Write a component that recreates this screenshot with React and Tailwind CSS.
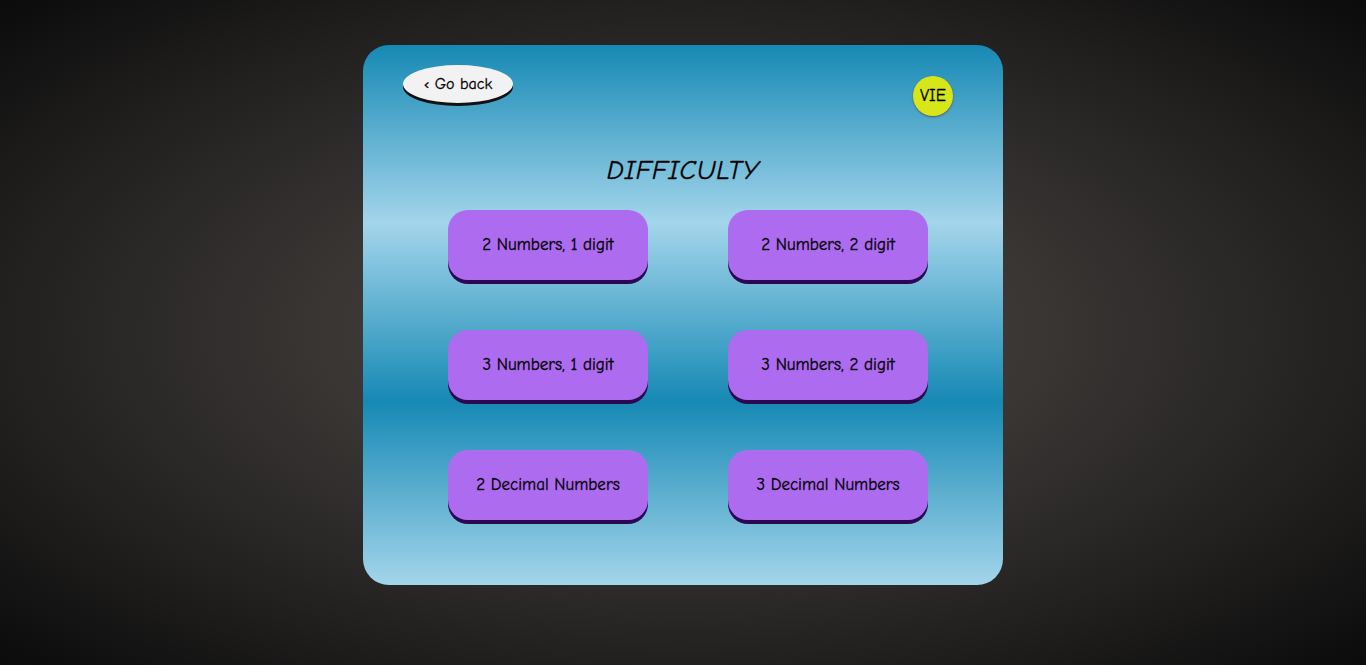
import React from 'react';

const levels = [
  '2 Numbers, 1 digit',
  '2 Numbers, 2 digit',
  '3 Numbers, 1 digit',
  '3 Numbers, 2 digit',
  '2 Decimal Numbers',
  '3 Decimal Numbers',
];

const App = () => {
  return (
    <div
      className="w-full h-[665px] flex justify-center pt-[45px] bg-[radial-gradient(ellipse_at_center,#4a4643_0%,#3a3735_35%,#262423_65%,#0b0b0b_100%)]"
      style={{ fontFamily: '"Comic Sans MS", "Comic Neue", "Lato", sans-serif' }}
    >
      <div className="w-[640px] h-[540px] rounded-[26px] px-10 pt-5 bg-[linear-gradient(180deg,#1689b4_0%,#a3d5eb_33%,#1689b4_66%,#a3d5eb_100%)]">
        <div className="flex items-start justify-between">
          <button className="w-[110px] h-[38px] rounded-[50%] bg-[#f2f2f2] shadow-[0_3px_0_#111] text-[16px] text-black [-webkit-text-stroke:0.3px_black]">
            ‹ Go back
          </button>
          <button className="mt-[11px] mr-[10px] w-10 h-10 rounded-full bg-[#d6e619] shadow-[0_1px_2px_#556] text-[17px] text-black [-webkit-text-stroke:0.3px_black]">
            VIE
          </button>
        </div>
        <h1 className="mt-[39px] text-center italic text-[27px] leading-[32px] text-black tracking-wide [-webkit-text-stroke:0.4px_black]">
          DIFFICULTY
        </h1>
        <div className="mt-[23px] pl-[10px] grid grid-cols-[200px_200px] justify-center gap-x-20 gap-y-[50px]">
          {levels.map((l) => (
            <button
              key={l}
              className="h-[70px] rounded-[20px] bg-[#ad6cf0] shadow-[0_4px_0_#2b0950] text-[17px] text-black [-webkit-text-stroke:0.3px_black]"
            >
              {l}
            </button>
          ))}
        </div>
      </div>
    </div>
  );
};

export default App;
